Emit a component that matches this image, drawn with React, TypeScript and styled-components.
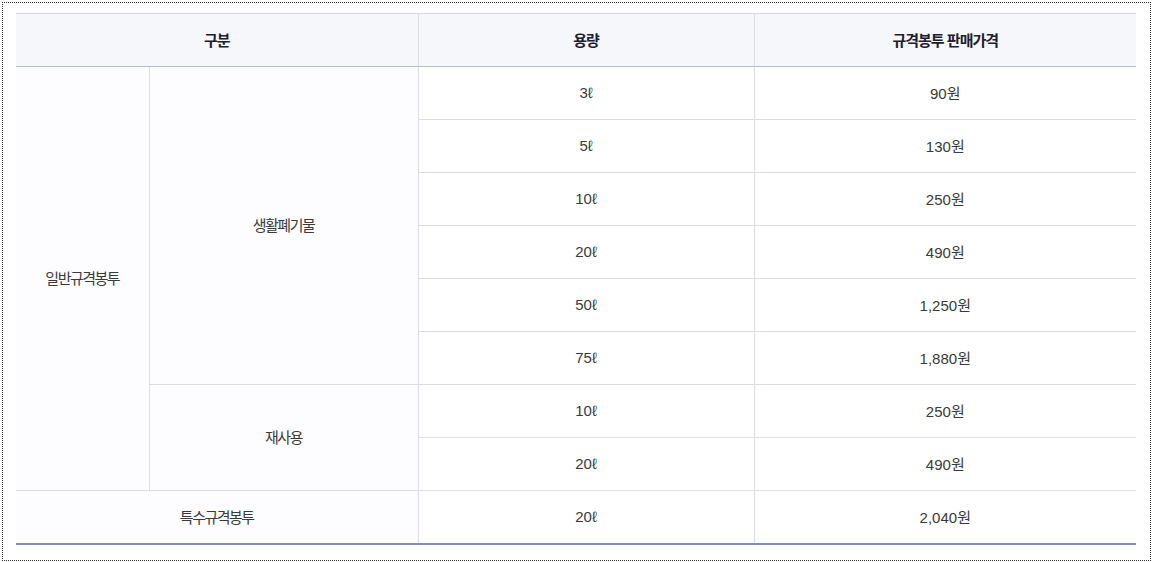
import styled, { createGlobalStyle } from 'styled-components';

const GlobalStyle = createGlobalStyle`
  body {
    margin: 0;
    background: #fff;
    font-family: 'Liberation Sans', 'Noto Sans CJK KR', sans-serif;
  }
`;

const Frame = styled.div`
  margin: 2px;
  width: 1149px;
  box-sizing: border-box;
  border: 1px dotted #333;
  padding: 10px 13px 15px 13px;
`;

const Table = styled.table`
  width: 1120px;
  table-layout: fixed;
  border-collapse: collapse;
  border-top: 1px solid #d6d8de;
  border-bottom: 2px solid #7c8cc0;
  font-size: 15px;
  color: #3a3a3a;
`;

const HeadCell = styled.th<{ $first?: boolean }>`
  height: 50px;
  padding: 0 0 2px;
  background: #f6f7fb;
  border-bottom: 1px solid #b4bccd;
  border-left: ${(p) => (p.$first ? 'none' : '1px solid #dcdde3')};
  color: #1c2030;
  font-weight: 700;
  letter-spacing: -1px;
  text-align: center;
  vertical-align: middle;
`;

const Cell = styled.td<{ $first?: boolean; $soft?: boolean; $label?: boolean }>`
  height: 50px;
  padding: 0 0 2px;
  background: ${(p) => (p.$soft ? '#fdfdff' : '#fff')};
  border-bottom: 1px solid #dcdce4;
  border-left: ${(p) => (p.$first ? 'none' : '1px solid #dcdce4')};
  letter-spacing: ${(p) => (p.$label ? '-1.5px' : '0')};
  text-align: center;
  vertical-align: middle;
`;

const Won = styled.span`
  letter-spacing: 0;
`;

const general = [
  { size: '3ℓ', price: '90' },
  { size: '5ℓ', price: '130' },
  { size: '10ℓ', price: '250' },
  { size: '20ℓ', price: '490' },
  { size: '50ℓ', price: '1,250' },
  { size: '75ℓ', price: '1,880' },
];

const reuse = [
  { size: '10ℓ', price: '250' },
  { size: '20ℓ', price: '490' },
];

export default function App() {
  const total = general.length + reuse.length;
  return (
    <>
      <GlobalStyle />
      <Frame>
        <Table>
          <colgroup>
            <col style={{ width: 133 }} />
            <col style={{ width: 269 }} />
            <col style={{ width: 336 }} />
            <col style={{ width: 382 }} />
          </colgroup>
          <thead>
            <tr>
              <HeadCell $first colSpan={2}>
                구분
              </HeadCell>
              <HeadCell>용량</HeadCell>
              <HeadCell>규격봉투 판매가격</HeadCell>
            </tr>
          </thead>
          <tbody>
            {general.map((row, i) => (
              <tr key={`g${i}`}>
                {i === 0 && (
                  <>
                    <Cell $first $soft $label rowSpan={total}>
                      일반규격봉투
                    </Cell>
                    <Cell $soft $label rowSpan={general.length}>
                      생활폐기물
                    </Cell>
                  </>
                )}
                <Cell>{row.size}</Cell>
                <Cell>
                  {row.price}
                  <Won>원</Won>
                </Cell>
              </tr>
            ))}
            {reuse.map((row, i) => (
              <tr key={`r${i}`}>
                {i === 0 && (
                  <Cell $soft $label rowSpan={reuse.length}>
                    재사용
                  </Cell>
                )}
                <Cell>{row.size}</Cell>
                <Cell>
                  {row.price}
                  <Won>원</Won>
                </Cell>
              </tr>
            ))}
            <tr>
              <Cell $first $soft $label colSpan={2}>
                특수규격봉투
              </Cell>
              <Cell>20ℓ</Cell>
              <Cell>
                2,040<Won>원</Won>
              </Cell>
            </tr>
          </tbody>
        </Table>
      </Frame>
    </>
  );
}
